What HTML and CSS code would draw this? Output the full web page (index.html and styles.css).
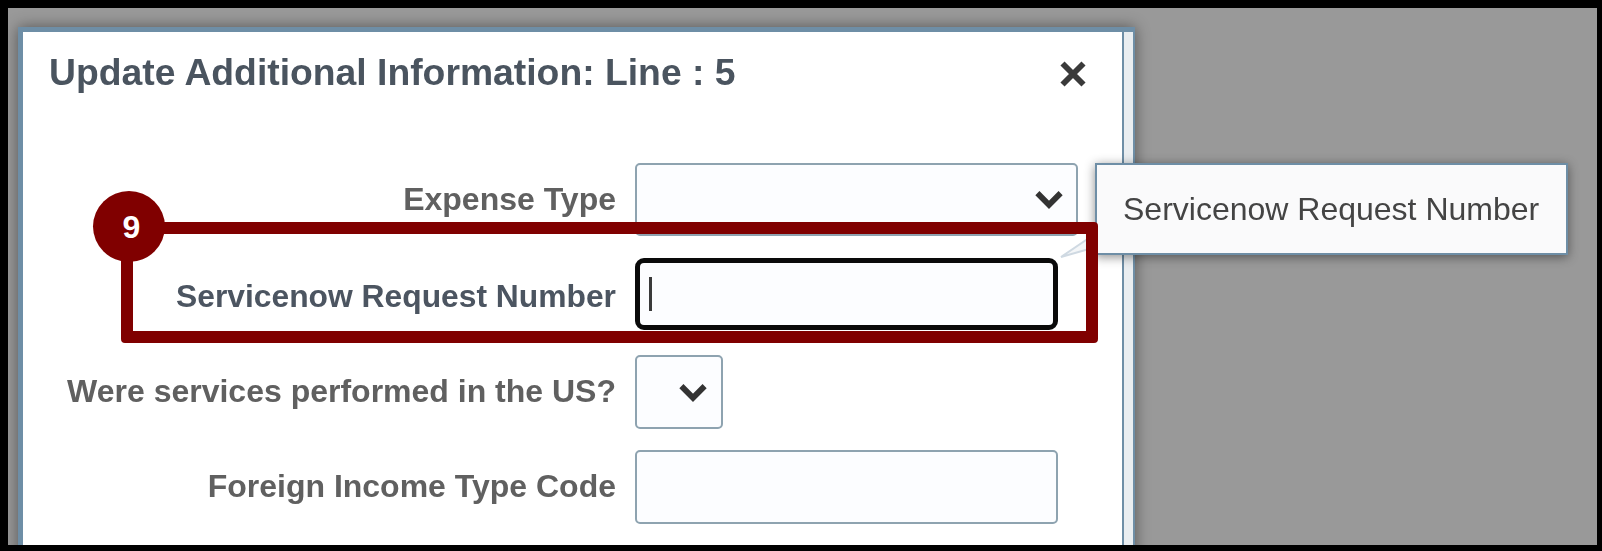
FILE: index.html
```html
<!DOCTYPE html>
<html lang="en">
<head>
<meta charset="utf-8">
<title>Update Additional Information</title>
<link rel="stylesheet" href="styles.css">
</head>
<body>
<main class="stage">
  <section class="dialog">
    <div class="dialog-body">
      <header class="dialog-head">
        <h1 class="dialog-title">Update Additional Information: Line : 5</h1>
        <svg class="close-icon" viewBox="0 0 24 24" aria-label="Close"><path d="M3 3 L21 21 M21 3 L3 21"/></svg>
      </header>
      <form class="form-grid">
        <label class="form-label">Expense Type</label>
        <div class="field field-select"><svg class="chevron" viewBox="0 0 28 18"><path d="M3 3 L14 14 L25 3"/></svg></div>
        <label class="form-label form-label-focus">Servicenow Request Number</label>
        <div class="field field-input field-focus"><span class="caret"></span></div>
        <label class="form-label">Were services performed in the US?</label>
        <div class="field field-small"><svg class="chevron" viewBox="0 0 28 18"><path d="M3 3 L14 14 L25 3"/></svg></div>
        <label class="form-label">Foreign Income Type Code</label>
        <div class="field field-input"></div>
      </form>
    </div>
    <div class="dialog-strip"></div>
  </section>
  <aside class="tooltip">Servicenow Request Number</aside>
  <svg class="tooltip-tail" viewBox="0 0 30 22"><path d="M29 1 L1 20 L29 12"/></svg>
  <div class="callout-box"></div>
  <div class="callout-badge">9</div>
</main>
</body>
</html>
```

FILE: styles.css
```css
* { box-sizing: border-box; }
html, body { height: 100%; }
body {
  margin: 0;
  padding: 8px 5px 6px 8px;
  background: #000;
  font-family: "Liberation Sans", Arial, sans-serif;
  overflow: hidden;
}
.stage {
  position: relative;
  height: 537px;
  background: #999;
  overflow: hidden;
  padding: 19px 0 0 10px;
}
.dialog {
  display: flex;
  width: 1117px;
  height: 560px;
  background: #e9edf0;
  border: 5px solid #6e8ea6;
  border-right-width: 2px;
  border-bottom: 0;
  box-shadow: 0 0 14px rgba(0, 0, 0, .45);
}
.dialog-body {
  flex: 1;
  background: #fff;
  border-right: 2px solid #6e8ea6;
  filter: blur(.6px);
}
.dialog-strip { width: 9px; }
.dialog-head {
  display: flex;
  justify-content: space-between;
  align-items: flex-start;
  padding: 17px 35px 0 26px;
  height: 131px;
}
.dialog-title {
  margin: 0;
  font-size: 37.3px;
  line-height: 46px;
  font-weight: 700;
  color: #4a545f;
}
.close-icon { width: 28px; height: 28px; margin-top: 11px; }
.close-icon path { fill: none; stroke: #3a3a3a; stroke-width: 5; }
.form-grid {
  display: grid;
  grid-template-columns: 593px 1fr;
  grid-template-rows: 94px 98px 95px 74px;
  column-gap: 19px;
  align-items: start;
}
.form-label {
  text-align: right;
  font-size: 32px;
  line-height: 73px;
  font-weight: 700;
  color: #606060;
}
.form-label-focus { color: #4c5561; line-height: 79px; font-size: 31.8px; }
.field {
  height: 74px;
  display: flex;
  align-items: center;
  justify-content: flex-end;
  background: #fcfdff;
  border: 2px solid #8ea3b0;
  border-radius: 5px;
}
.field-select { width: 443px; height: 73px; padding-right: 12px; }
.field-input { width: 423px; }
.field-small { width: 88px; padding-right: 13px; }
.field-focus {
  margin-top: 1px;
  height: 72px;
  border: 5px solid #0a0a0a;
  border-radius: 9px;
  justify-content: flex-start;
  padding-left: 9px;
}
.caret { width: 3px; height: 34px; background: #3a3a3a; }
.chevron { width: 30px; height: 19px; }
.chevron path { fill: none; stroke: #333; stroke-width: 5.5; }
.tooltip {
  position: absolute;
  left: 1087px;
  top: 155px;
  width: 473px;
  height: 92px;
  padding-left: 26px;
  display: flex;
  align-items: center;
  background: #fafafb;
  border: 2px solid #6e8ea6;
  box-shadow: 0 2px 10px rgba(0, 0, 0, .45);
  color: #444;
  font-size: 32px;
  filter: blur(.6px);
}
.tooltip-tail {
  position: absolute;
  left: 1052px;
  top: 229px;
  width: 30px;
  height: 22px;
}
.tooltip-tail path { fill: #f4f6f8; stroke: #cfd9e2; stroke-width: 2; }
.callout-box {
  position: absolute;
  left: 113px;
  top: 214px;
  width: 977px;
  height: 121px;
  border: 12px solid #800000;
  border-radius: 4px;
}
.callout-badge {
  position: absolute;
  left: 85px;
  top: 183px;
  width: 72px;
  height: 71px;
  border-radius: 50%;
  background: #800000;
  color: #fff;
  font-size: 32px;
  font-weight: 700;
  display: flex;
  align-items: center;
  justify-content: center;
  padding: 2px 0 0 5px;
}
```
